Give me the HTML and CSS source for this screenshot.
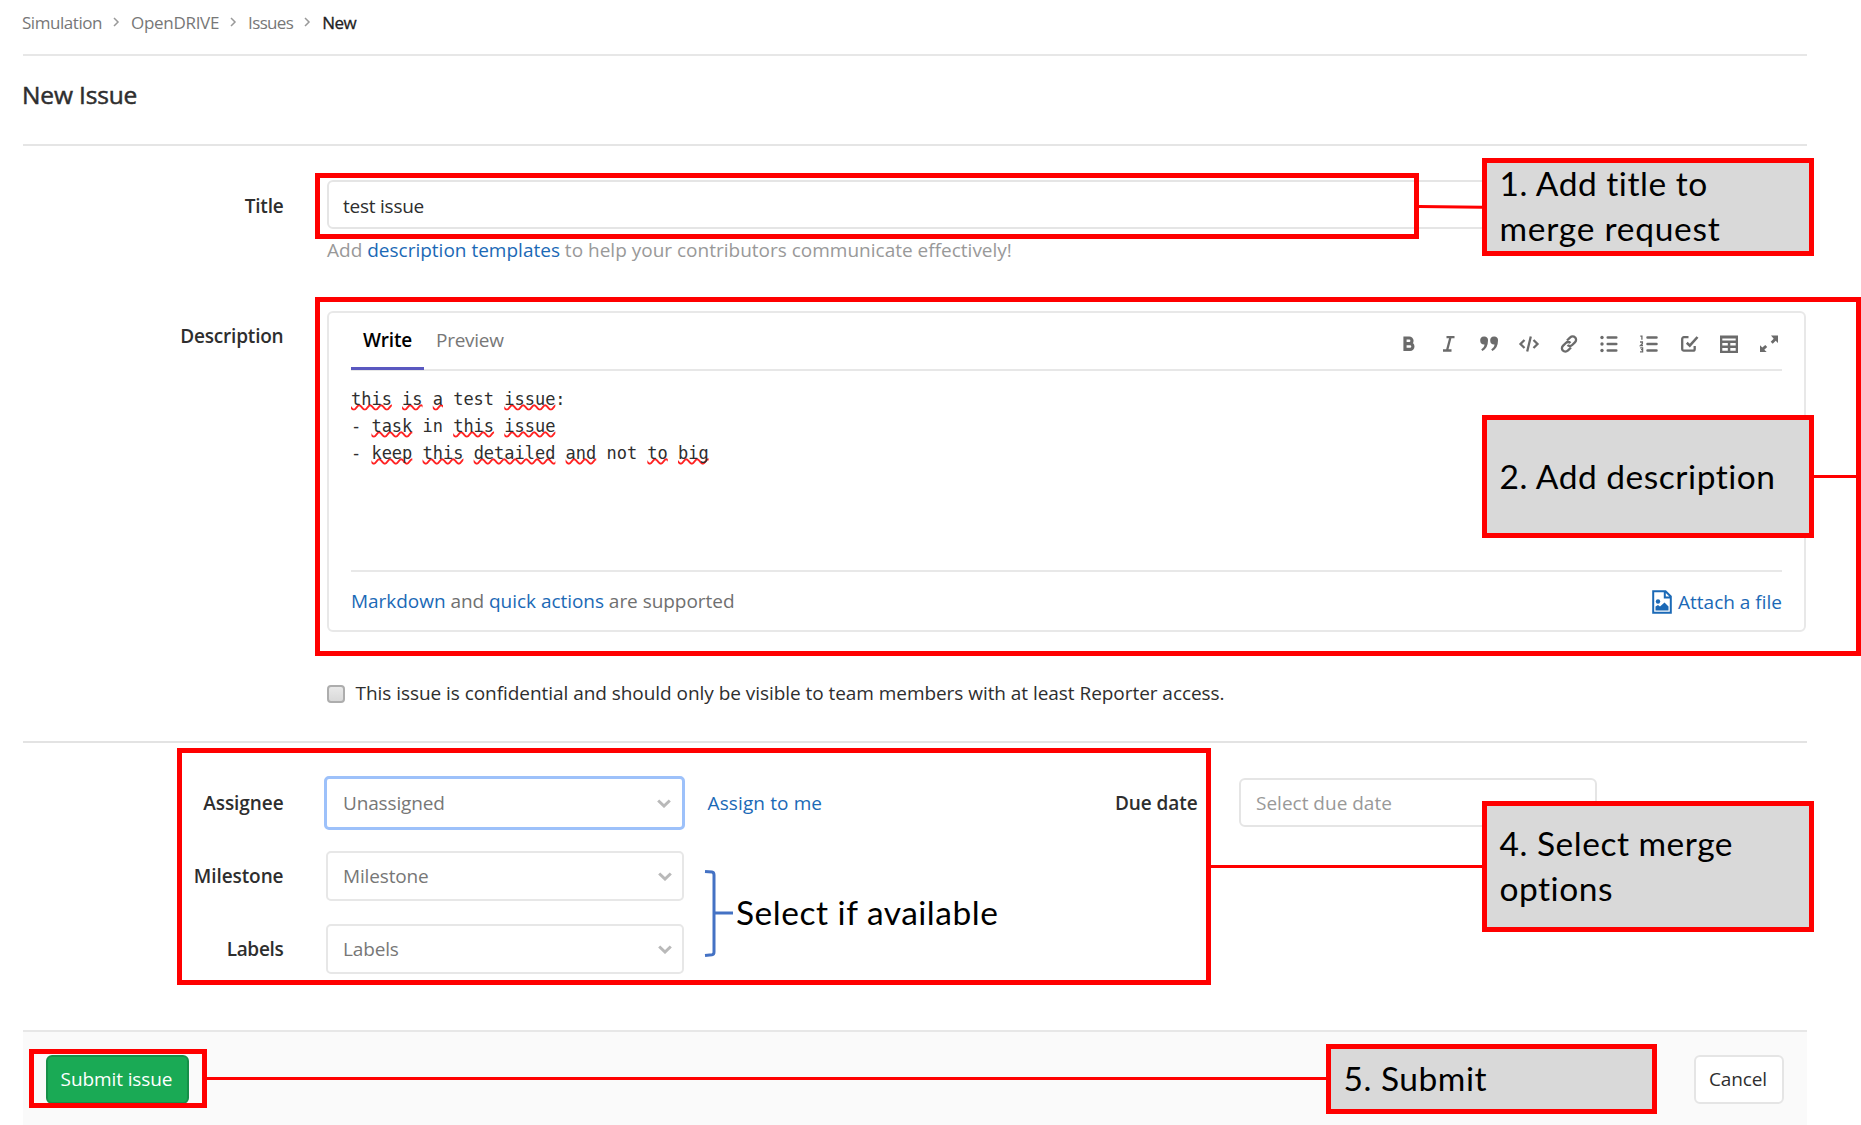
FILE: index.html
```html
<!DOCTYPE html>
<html lang="en">
<head>
<meta charset="utf-8">
<title>New Issue</title>
<link rel="stylesheet" href="styles.css">
</head>
<body>
<main class="page">
  <nav class="breadcrumb">
    <a class="crumb">Simulation</a><svg class="sep" viewBox="0 0 6 10"><path d="M1 1l4 4-4 4"/></svg>
    <a class="crumb crumb-project">OpenDRIVE</a><svg class="sep" viewBox="0 0 6 10"><path d="M1 1l4 4-4 4"/></svg>
    <a class="crumb crumb-issues">Issues</a><svg class="sep" viewBox="0 0 6 10"><path d="M1 1l4 4-4 4"/></svg>
    <span class="crumb current">New</span>
  </nav>
  <h1 class="heading">New Issue</h1>

  <form class="form">
    <div class="row row-title">
      <label class="label">Title</label>
      <div class="field">
        <div class="input title-input">test issue</div>
        <p class="help">Add <a class="link">description templates</a> to help your contributors communicate effectively!</p>
      </div>
    </div>
    <div class="row row-description">
      <label class="label label-description">Description</label>
      <div class="editor">
        <div class="editor-head">
          <div class="tabs">
            <span class="tab active">Write</span>
            <span class="tab">Preview</span>
          </div>
          <div class="toolbar">
            <svg viewBox="0 0 18 18"><path class="line" stroke-width="3.2" d="M5 3h4.200a2.700 2.700 0 0 1 0 5.600H5zM5 8.600h5a2.900 2.900 0 0 1 0 5.800H5z"/></svg>
            <svg viewBox="0 0 18 18"><path class="line" d="M6.500 2.200H14.500M3 15.500h8.500M10.500 2.200l-3.500 13.300"/></svg>
            <svg viewBox="0 0 18 18"><path d="M4 1.500a3.600 3.600 0 0 1 4 4c0 5-2 8.500-5.500 10.500l-1.300-1.400c2-1.500 3.200-3 3.300-5A4 4 0 0 1 4 1.500zM14 1.500a3.600 3.600 0 0 1 4 4c0 5-2 8.500-5.500 10.500l-1.300-1.400c2-1.500 3.200-3 3.300-5A4 4 0 0 1 14 1.500z"/></svg>
            <svg class="wide" viewBox="0 0 20 18"><path class="line" d="M5.500 5L1.500 9l4 4M14.500 5l4 4-4 4M11.800 1.500l-3.600 15"/></svg>
            <svg viewBox="0 0 18 18"><path class="line" d="M7 5.500l3.200-3.100a3.300 3.300 0 0 1 4.900 0 3.300 3.300 0 0 1 0 4.700l-2.900 2.900a3.300 3.300 0 0 1-4.700 0M11 12.500l-3.200 3.100a3.300 3.300 0 0 1-4.900 0 3.300 3.300 0 0 1 0-4.700L5.800 8a3.300 3.300 0 0 1 4.700 0"/></svg>
            <svg viewBox="0 0 18 18"><circle cx="2" cy="2.500" r="1.700"/><circle cx="2" cy="9" r="1.700"/><circle cx="2" cy="15.500" r="1.700"/><path class="line" stroke-width="2.500" stroke-linecap="round" d="M7.700 2.500h8.600M7.700 9h8.600M7.700 15.500h8.600"/></svg>
            <svg viewBox="0 0 18 18"><path class="line" stroke-width="1.300" d="M.3 1.200h1.600v3.500M0 7h2.400v1.500L.5 10.500h2.500M.2 12.800h2.400v1.900H1h1.600v2.200H0"/><path class="line" stroke-width="2.500" stroke-linecap="round" d="M7.500 2.500h9M7.500 9h9M7.500 15.500h9"/></svg>
            <svg viewBox="0 0 18 18"><path class="line" d="M8.500 2.200H4A1.700 1.700 0 0 0 2.200 4v10a1.700 1.700 0 0 0 1.800 1.700h9a1.700 1.700 0 0 0 1.700-1.700V11"/><path class="line" stroke-width="2.600" d="M6.800 7.800l3 2.800L17.500 2"/></svg>
            <svg viewBox="0 0 18 18"><path fill-rule="evenodd" d="M0 .5h18V18H0zM2.300 3.500v2h13.400v-2zM2.300 8v2.500h5.500V8zm8 0v2.500h5.400V8zM2.300 13v2.700h5.500V13zm8 0v2.700h5.400V13z"/></svg>
            <svg viewBox="0 0 18 18"><path d="M11 .5h7V8l-2.300-2.300-3 3-2-2 3-3zM0 10.300l2.300 2.300 3-2.700 1.900 2-2.900 2.800L6.700 17H0z"/></svg>
          </div>
        </div>
        <div class="textarea">
          <div class="code"><u>this</u><i> </i><u>is</u><i> </i><u>a</u><i> test </i><u>issue</u><i>:</i></div>
          <div class="code"><i>- </i><u>task</u><i> in </i><u>this</u><i> </i><u>issue</u></div>
          <div class="code"><i>- </i><u>keep</u><i> </i><u>this</u><i> </i><u>detailed</u><i> </i><u>and</u><i> not </i><u>to</u><i> </i><u>big</u></div>
        </div>
        <div class="editor-foot">
          <span class="md"><a class="link">Markdown</a> and <a class="link">quick actions</a> are supported</span>
          <a class="link attach"><svg viewBox="0 0 20 24"><path class="outline" d="M1.200 1.200h12.300l5.300 5.300v16.300H1.200zM12.800 1.500v6h6"/><circle cx="6" cy="11.500" r="2.200"/><path d="M3.500 20.500v-4l2.500-1.500 2 1.500 4.500-4 4 4v4z"/></svg><span>Attach a file</span></a>
        </div>
      </div>
    </div>
    <div class="row row-check">
      <span class="checkbox"></span><span class="check-text">This issue is confidential and should only be visible to team members with at least Reporter access.</span>
    </div>

    <div class="options">
      <div class="col">
        <div class="opt"><label class="label label-tight">Assignee</label>
          <div class="select focus">Unassigned<svg class="chev" viewBox="0 0 14 9"><path d="M1.200 1.500L7 7l5.800-5.500"/></svg></div>
          <a class="link assign">Assign to me</a></div>
        <div class="opt"><label class="label label-tight">Milestone</label>
          <div class="select">Milestone<svg class="chev" viewBox="0 0 14 9"><path d="M1.200 1.500L7 7l5.800-5.500"/></svg></div></div>
        <div class="opt"><label class="label label-labels">Labels</label>
          <div class="select">Labels<svg class="chev" viewBox="0 0 14 9"><path d="M1.200 1.500L7 7l5.800-5.500"/></svg></div></div>
      </div>
      <div class="due">
        <label class="label due-label">Due date</label>
        <div class="input due-input">Select due date</div>
      </div>
    </div>

    <div class="actions">
      <button type="button" class="btn submit">Submit issue</button>
      <button type="button" class="btn cancel">Cancel</button>
    </div>
  </form>
</main>

<div class="frame frame-title"></div>
<div class="frame frame-description"></div>
<div class="frame frame-options"></div>
<div class="frame frame-submit"></div>
<svg class="wires" viewBox="0 0 1861 1125">
  <path class="wire" d="M1419 206.500L1482 207.300M1814 476.500H1857M1211 866.500H1482M207 1078.500H1326"/>
  <path class="brace" d="M705 871.500l7 .5q2 .3 2 3v77q0 2.500-2 2.800l-7 .700M714 913h19"/>
</svg>
<div class="note note-1"><p>1. Add title to<br><span class="wider">merge request</span></p></div>
<div class="note note-2"><p>2. Add description</p></div>
<div class="note note-4"><p>4. Select merge<br>options</p></div>
<div class="note note-5"><p>5. Submit</p></div>
<div class="caption">Select if available</div>
</body>
</html>
```
FILE: styles.css
```css
* { box-sizing: border-box; }
body {
  margin: 0;
  position: relative;
  width: 1861px;
  height: 1125px;
  overflow: hidden;
  background: #fff;
  color: #2e2e2e;
  font: 19px/27px "Open Sans", "Noto Sans", sans-serif;
}
.page { width: 1784px; margin-left: 23px; }
.link { color: #1b69b6; text-decoration: none; }

.breadcrumb {
  display: flex;
  align-items: center;
  height: 56px;
  padding-bottom: 10px;
  border-bottom: 2px solid #e7e7e7;
  font-size: 17px;
}
.crumb { color: #777; letter-spacing: -.45px; margin-left: -1px; }
.crumb-project { letter-spacing: -.3px; }
.crumb-issues { letter-spacing: -.65px; }
.crumb.current { color: #222; letter-spacing: -.5px; -webkit-text-stroke: .3px #222; }
.sep { width: 6px; height: 10px; margin: 0 13px 0 11px; overflow: visible; flex: none; }
.sep path { fill: none; stroke: #999; stroke-width: 1.5; }

.heading {
  display: flex;
  align-items: center;
  height: 90px;
  margin: 0;
  padding-bottom: 12px;
  border-bottom: 2px solid #e5e5e5;
  font-size: 24.5px;
  font-weight: 400;
  letter-spacing: -.15px;
  text-indent: -1px;
  -webkit-text-stroke: .5px #2e2e2e;
}

.row { display: flex; }
.row-title { padding-top: 34px; height: 164.5px; }
.label {
  flex: none;
  width: 260.5px;
  margin-right: 43.5px;
  text-align: right;
  font-weight: 600;
  letter-spacing: -.2px;
}
.row-title .label { padding-top: 13px; }
.field { flex: 1; }
.input {
  display: flex;
  align-items: center;
  height: 49px;
  padding: 3px 0 0 14px;
  border: 2px solid #e5e5e5;
  border-radius: 6px;
  background: #fff;
}
.title-input { letter-spacing: -.24px; }
.help { margin: 8px 0 0; color: #999; }

.label-description { padding-top: 12px; }
.editor {
  flex: 1;
  max-width: 1479px;
  height: 321.5px;
  padding: 0 22px;
  border: 2px solid #e8e8e8;
  border-radius: 6px;
}
.editor-head {
  display: flex;
  justify-content: space-between;
  height: 58px;
  border-bottom: 2px solid #e7e7e7;
}
.tabs { display: flex; }
.tab { padding: 14px 12px 0; color: #777; letter-spacing: -.28px; }
.tab.active { height: 57px; padding: 14px 12px 0; color: #000; font-weight: 600; letter-spacing: -.18px; border-bottom: 3px solid #5a58c0; }
.toolbar { display: flex; gap: 22px; padding: 22.5px 4.5px 0 0; }
.toolbar svg { width: 18px; height: 18px; fill: #6b6b6b; stroke-width: 2.3; overflow: visible; }
.toolbar .wide { width: 20px; margin: 0 -1px; }
.toolbar .line { fill: none; stroke: #6b6b6b; }
.textarea { height: 199.5px; padding-top: 15px; }
.code {
  height: 27.2px;
  white-space: pre;
  font: 16.98px/27.2px "DejaVu Sans Mono", monospace;
}
.code i { font-style: normal; }
.code u { text-decoration: underline wavy #f22 1.5px; text-underline-offset: -.5px; text-decoration-skip-ink: none; }
.editor-foot {
  display: flex;
  justify-content: space-between;
  align-items: center;
  height: 60px;
  padding-top: 1px;
  border-top: 2px solid #e8e8e8;
}
.md { color: #707070; letter-spacing: -.04px; }
.attach { display: flex; align-items: center; gap: 6px; }
.attach span { padding-top: 2px; }
.attach svg { width: 20px; height: 24px; fill: #1b69b6; }
.attach .outline { fill: none; stroke: #1b69b6; stroke-width: 2; }

.row-check {
  align-items: center;
  height: 111px;
  padding: 14px 0 0 304px;
  border-bottom: 2px solid #e3e3e3;
}
.checkbox {
  width: 17.5px;
  height: 18px;
  margin-right: 11px;
  border: 2px solid #adadad;
  border-radius: 4px;
  background: linear-gradient(#e9e9e9, #d9d9d9);
}
.check-text { letter-spacing: -.05px; }

.options { display: flex; height: 287px; padding-top: 34.5px; }
.col { width: 1092px; }
.opt { display: flex; align-items: center; height: 50px; margin-bottom: 23px; }
.opt .label { margin-right: 42.5px; padding-top: 2px; }
.opt .label-tight { letter-spacing: -.08px; }
.opt .label-labels { letter-spacing: -.3px; }
.select {
  display: flex;
  align-items: center;
  justify-content: space-between;
  width: 357.5px;
  height: 50px;
  padding: 2px 10px 0 15px;
  border: 2px solid #e7e7e7;
  border-radius: 5px;
  color: #777;
  letter-spacing: -.15px;
}
.select.focus { width: 361px; height: 54px; margin: 0 -2px; padding: 2px 11px 0 16px; border: 3px solid #9dc1fa; }
.chev { width: 14px; height: 9px; }
.chev path { fill: none; stroke: #b9b9b9; stroke-width: 3; }
.assign { margin-left: 24.5px; padding-top: 2px; letter-spacing: .12px; }
.due { display: flex; height: 50px; }
.due-label { width: 82.5px; margin-right: 41.5px; padding-top: 12.5px; letter-spacing: -.09px; white-space: nowrap; }
.due-input { width: 358px; padding-left: 15px; color: #999; }

.actions {
  display: flex;
  justify-content: space-between;
  height: 96px;
  padding: 23px 23px 0;
  border-top: 2px solid #e7e7e7;
  background: #fafafa;
}
.btn {
  height: 49px;
  padding: 0 2px 0 0;
  border: 2px solid #e5e5e5;
  border-radius: 6px;
  background: #fff;
  color: #2e2e2e;
  font: inherit;
  letter-spacing: -.1px;
}
.submit { width: 143px; border-color: #168f48; background: #1aaa55; color: #fff; }
.cancel { width: 90px; }

.frame { position: absolute; border: 5px solid #f00; }
.frame-title { left: 315px; top: 173px; width: 1104px; height: 66px; }
.frame-description { left: 315px; top: 297px; width: 1546px; height: 359px; }
.frame-options { left: 177px; top: 748px; width: 1034px; height: 237px; }
.frame-submit { left: 29px; top: 1049px; width: 178px; height: 59px; }
.wires { position: absolute; left: 0; top: 0; width: 1861px; height: 1125px; }
.wire { fill: none; stroke: #f00; stroke-width: 3; }
.brace { fill: none; stroke: #4472c4; stroke-width: 3; }

.note, .caption { position: absolute; color: #000; font: 33.5px/45px Lato, sans-serif; letter-spacing: .52px; white-space: nowrap; }
.note {
  display: flex;
  align-items: center;
  width: 332px;
  padding-left: 12.5px;
  border: 5px solid #f00;
  background: #d9d9d9;
}
.note p { margin: 0; }
.wider { letter-spacing: .75px; }
.note-1 { left: 1482px; top: 158px; height: 98px; padding-bottom: 3px; }
.note-2 { left: 1482px; top: 415px; height: 123px; }
.note-4 { left: 1482px; top: 801px; height: 131px; padding-bottom: 1px; }
.note-5 { left: 1326px; top: 1044px; width: 331px; height: 70px; padding-bottom: 1px; }
.caption { left: 736px; top: 889.5px; }
```
